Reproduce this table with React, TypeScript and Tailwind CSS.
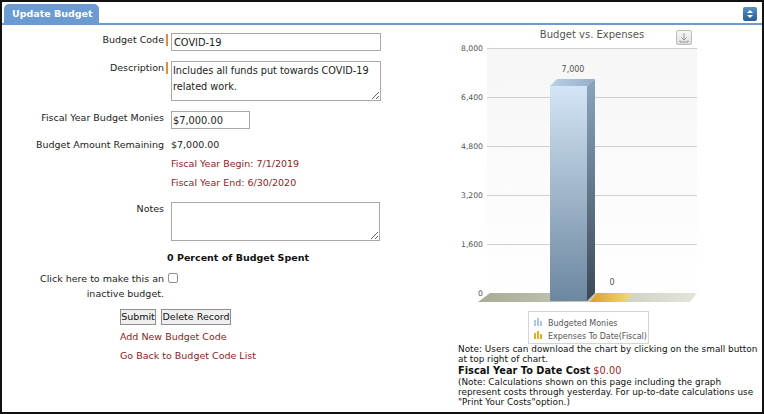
import React from 'react'

function Marker() {
  return <span className="block ml-[2px] mt-[1px] w-[2px] h-[12px] bg-[#f08a24]" />
}

function SortIcon() {
  return (
    <div className="mt-[5px] mr-[5px] w-[14px] h-[14px] rounded-[2px] bg-gradient-to-b from-[#5a8fc8] to-[#2a5d94] flex items-center justify-center">
      <svg width="8" height="10" viewBox="0 0 8 10">
        <path d="M4 1 L7 4 L1 4 Z" fill="#fff" />
        <path d="M1 6 L7 6 L4 9 Z" fill="#fff" />
      </svg>
    </div>
  )
}

function BudgetForm() {
  return (
    <div className="w-[453px] pt-[8px] text-[9.5px] text-[#222]">
      <div className="grid grid-cols-[162px_7px_1fr] h-[18px]">
        <div className="text-right leading-[14px]">Budget Code</div>
        <Marker />
        <input
          readOnly
          value="COVID-19"
          className="w-[210px] h-[18px] border border-[#a9a9a9] px-[2px] text-[9.8px] text-[#222] outline-none"
        />
      </div>
      <div className="grid grid-cols-[162px_7px_1fr] h-[40px] mt-[10px]">
        <div className="text-right leading-[14px]">Description</div>
        <Marker />
        <textarea
          readOnly
          value="Includes all funds put towards COVID-19 related work."
          className="w-[210px] h-[40px] border border-[#a9a9a9] px-[1px] py-[1px] text-[9.7px] leading-[16px] text-[#222] outline-none resize-y"
        />
      </div>
      <div className="grid grid-cols-[162px_7px_1fr] h-[18px] mt-[10px]">
        <div className="text-right leading-[14px]">Fiscal Year Budget Monies</div>
        <div />
        <input
          readOnly
          value="$7,000.00"
          className="w-[79px] h-[18px] border border-[#a9a9a9] px-[1px] text-[9.8px] text-[#222] outline-none"
        />
      </div>
      <div className="grid grid-cols-[162px_7px_1fr] mt-[6px] leading-[19px]">
        <div className="text-right">Budget Amount Remaining</div>
        <div />
        <div>$7,000.00</div>
        <div />
        <div />
        <div className="text-[#8b2525]">Fiscal Year Begin: 7/1/2019</div>
        <div />
        <div />
        <div className="text-[#8b2525]">Fiscal Year End: 6/30/2020</div>
      </div>
      <div className="grid grid-cols-[162px_7px_1fr] h-[39px] mt-[10px]">
        <div className="text-right leading-[14px]">Notes</div>
        <div />
        <textarea
          readOnly
          className="w-[209px] h-[39px] border border-[#a9a9a9] outline-none resize-y"
        />
      </div>
      <div className="mt-[8px] pl-[165px] leading-[18px] font-bold text-[#111]">0 Percent of Budget Spent</div>
      <div className="grid grid-cols-[162px_1fr] mt-[4px] leading-[15px]">
        <div className="text-right">
          Click here to make this an
          <br />
          inactive budget.
        </div>
        <div className="pl-[4px] pt-[2px]">
          <input
            type="checkbox"
            className="appearance-none block w-[10px] h-[10px] border border-[#8f8f8f] rounded-[2px] bg-white"
          />
        </div>
      </div>
      <div className="mt-[8px] pl-[118px] flex gap-[5px]">
        <button className="h-[16px] w-[36px] border border-[#8f8f8f] bg-[#efefef] text-[9.5px] leading-[14px] text-[#111]">
          Submit
        </button>
        <button className="h-[16px] w-[70px] border border-[#8f8f8f] bg-[#efefef] text-[9.5px] leading-[14px] text-[#111]">
          Delete Record
        </button>
      </div>
      <div className="mt-[2px] pl-[118px] leading-[19px] text-[#8b1c1c]">
        <div>Add New Budget Code</div>
        <div>Go Back to Budget Code List</div>
      </div>
    </div>
  )
}

function Chart() {
  const grid = [22, 71, 120, 169, 218]
  const labels = ['8,000', '6,400', '4,800', '3,200', '1,600', '0']
  return (
    <svg width="250" height="318" viewBox="0 0 250 318" className="block" fontFamily="'DejaVu Sans', Verdana, sans-serif">
      <defs>
        <linearGradient id="plotBg" x1="0" y1="0" x2="0" y2="1">
          <stop offset="0" stopColor="#f6f6f6" />
          <stop offset="1" stopColor="#ffffff" />
        </linearGradient>
        <linearGradient id="barFront" x1="0" y1="0" x2="0" y2="1">
          <stop offset="0" stopColor="#d3e4f6" />
          <stop offset="1" stopColor="#6c879f" />
        </linearGradient>
        <linearGradient id="barSide" x1="0" y1="0" x2="0" y2="1">
          <stop offset="0" stopColor="#8aa5bd" />
          <stop offset="1" stopColor="#3b4956" />
        </linearGradient>
        <linearGradient id="barTop" x1="0" y1="0" x2="1" y2="0">
          <stop offset="0" stopColor="#b9d0e6" />
          <stop offset="1" stopColor="#95afc8" />
        </linearGradient>
        <linearGradient id="floor" x1="0" y1="0" x2="1" y2="0">
          <stop offset="0" stopColor="#a7ac94" />
          <stop offset="1" stopColor="#e3e5da" />
        </linearGradient>
        <linearGradient id="gold" x1="0" y1="0" x2="1" y2="0">
          <stop offset="0" stopColor="#d9a224" />
          <stop offset="1" stopColor="#f3dc86" />
        </linearGradient>
        <linearGradient id="btn" x1="0" y1="0" x2="0" y2="1">
          <stop offset="0" stopColor="#f8f8f8" />
          <stop offset="1" stopColor="#dcdcdc" />
        </linearGradient>
      </defs>

      <text x="137" y="12" textAnchor="middle" fontSize="10" fill="#555">Budget vs. Expenses</text>

      <rect x="221.5" y="4.5" width="15" height="14" rx="2" fill="url(#btn)" stroke="#bbb" />
      <path d="M229 7 V14 M226.5 11.5 L229 14 L231.5 11.5 M225 14.5 V16 H233 V14.5" stroke="#999" strokeWidth="1" fill="none" />

      <rect x="32" y="22" width="210" height="250" fill="url(#plotBg)" />
      {grid.map((y) => (
        <line key={y} x1="32" x2="242" y1={y + 0.5} y2={y + 0.5} stroke="#cfcfcf" />
      ))}
      {labels.map((l, i) => (
        <text key={l} x="28" y={25 + i * 49} textAnchor="end" fontSize="7.7" fill="#555">
          {l}
        </text>
      ))}

      <polygon points="23,276 35,267 242,267 235,276" fill="url(#floor)" />

      <polygon points="95,60 102,53 140,53 132,60" fill="url(#barTop)" />
      <polygon points="132,60 140,53 140,267 132,275" fill="url(#barSide)" />
      <rect x="95" y="60" width="37" height="215" fill="url(#barFront)" />
      <text x="118" y="46" textAnchor="middle" fontSize="8" fill="#555">7,000</text>

      <polygon points="135,276 142,267 178,267 170,276" fill="url(#gold)" />
      <text x="157" y="259" textAnchor="middle" fontSize="8" fill="#555">0</text>

      <rect x="73.5" y="285.5" width="120" height="32" fill="#fff" stroke="#d4d4d4" />
      <g fill="#a9c8ea">
        <rect x="79" y="294" width="2" height="6" />
        <rect x="82" y="292" width="2" height="8" />
        <rect x="85" y="295" width="2" height="5" />
      </g>
      <text x="93" y="299.5" fontSize="8" fill="#555">Budgeted Monies</text>
      <g fill="#e5ae1c">
        <rect x="79" y="307" width="2" height="6" />
        <rect x="82" y="305" width="2" height="8" />
        <rect x="85" y="308" width="2" height="5" />
      </g>
      <text x="93" y="312.5" fontSize="8" fill="#555">Expenses To Date(Fiscal)</text>
    </svg>
  )
}

function ChartPanel() {
  return (
    <div className="w-[307px] pt-[1px]">
      <Chart />
      <div className="pl-[3px] pr-[2px] text-[#111]">
        <p className="text-[8.9px] leading-[10px]">
          Note: Users can download the chart by clicking on the small button at top right of chart.
        </p>
        <p className="mt-[1px] text-[9.8px] leading-[12px]">
          <span className="font-bold">Fiscal Year To Date Cost</span> <span className="text-[#9b1f1f]">$0.00</span>
        </p>
        <p className="text-[8.9px] leading-[10px]">
          (Note: Calculations shown on this page including the graph represent costs through yesterday. For up-to-date
          calculations use "Print Your Costs"option.)
        </p>
      </div>
    </div>
  )
}

export default function App() {
  return (
    <div className="w-[764px] h-[414px] bg-white border-2 border-[#111] overflow-hidden font-['DejaVu_Sans',Verdana,sans-serif] text-[#222]">
      <div className="h-[23px] border-b-2 border-[#6b9bd2] flex justify-between pl-[2px]">
        <div className="self-end h-[19px] w-[95px] rounded-t-[5px] bg-[#6b9bd2] pl-[8px] text-[9.5px] font-bold leading-[19px] text-white">
          Update Budget
        </div>
        <SortIcon />
      </div>
      <div className="flex">
        <BudgetForm />
        <ChartPanel />
      </div>
    </div>
  )
}
